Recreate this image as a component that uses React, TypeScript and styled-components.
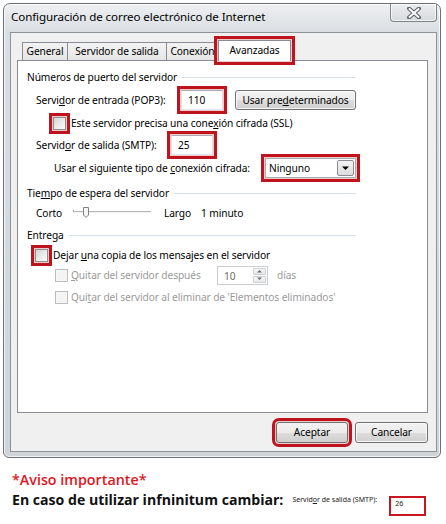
import React from 'react';
import styled, { createGlobalStyle, css } from 'styled-components';

const ui = `"Noto Sans", "Open Sans", "DejaVu Sans", sans-serif`;

const Global = createGlobalStyle`
  html, body { margin: 0; padding: 0; background: #ffffff; }
  body { font-family: ${ui}; color: #000; }
  * { box-sizing: border-box; }
`;

type HL = { $hl?: boolean };

const highlight = css<HL>`
  ${(p) =>
    p.$hl &&
    css`
      outline: 3px solid #bd141e;
      outline-offset: 1px;
      box-shadow: 0 0 0 1px #f2c9cb;
    `}
`;

const dialogText = css`
  font-size: 10.2px;
  letter-spacing: -0.1px;
`;

const Page = styled.div`
  width: 446px;
  height: 524px;
  padding: 3px 0 0 3px;
  display: flex;
  flex-direction: column;
  overflow: hidden;
`;

const Window = styled.div`
  width: 438px;
  height: 455px;
  border: 1px solid #6b7075;
  border-radius: 7px 7px 6px 6px;
  background: linear-gradient(#eef0f2, #dadee2 28px, #cfd4d9);
  box-shadow: inset 0 0 0 1px rgba(255, 255, 255, 0.75);
  display: flex;
  flex-direction: column;
`;

const TitleBar = styled.div`
  height: 28px;
  display: flex;
  justify-content: space-between;
  align-items: flex-start;
  padding: 0 3px 0 7px;
`;

const Title = styled.div`
  font-size: 11.6px;
  line-height: 26px;
  color: #000;
  letter-spacing: -0.1px;
`;

const CloseButton = styled.div`
  width: 47px;
  height: 18px;
  border: 1px solid #7d8389;
  border-top: none;
  border-radius: 0 0 4px 4px;
  background: linear-gradient(#eceef0, #d6dade);
  box-shadow: inset 0 0 0 1px rgba(255, 255, 255, 0.7);
  display: flex;
  align-items: center;
  justify-content: center;
`;

const Client = styled.div`
  flex: 1;
  margin: 0 3px 5px 6px;
  border: 1px solid #8d9296;
  background: #f0f0f0;
  padding: 7px 8px 8px 6px;
  display: flex;
  flex-direction: column;
`;

const TabRow = styled.div`
  height: 20px;
  display: flex;
  align-items: flex-end;
  padding-left: 6px;
  position: relative;
  z-index: 1;
`;

const Tab = styled.div<{ $w: number; $active?: boolean } & HL>`
  width: ${(p) => p.$w}px;
  height: 18px;
  margin-left: -1px;
  border: 1px solid #898c95;
  border-bottom: none;
  background: linear-gradient(#f3f3f3, #e5e5e5);
  ${dialogText}
  line-height: 17px;
  text-align: center;
  white-space: nowrap;
  ${(p) =>
    p.$active &&
    css`
      height: 21px;
      margin: 0 -2px -1px -1px;
      background: #ffffff;
      line-height: 19px;
      position: relative;
      z-index: 2;
    `}
  ${highlight}
`;

const Panel = styled.div`
  flex: 1;
  border: 1px solid #898c95;
  background: #ffffff;
  padding: 8px 0 0 9px;
  ${dialogText}
`;

const Content = styled.div`
  width: 329px;
  display: flex;
  flex-direction: column;
`;

const Heading = styled.div<{ $mt?: number }>`
  height: 16px;
  margin-top: ${(p) => p.$mt ?? 0}px;
  display: flex;
  align-items: center;
  gap: 5px;
  white-space: nowrap;
  &::after {
    content: '';
    flex: 1;
    height: 1px;
    background: #d5dfe5;
  }
`;

const Row = styled.div<{ $h: number; $mt?: number; $indent?: number }>`
  height: ${(p) => p.$h}px;
  margin-top: ${(p) => p.$mt ?? 0}px;
  padding-left: ${(p) => p.$indent ?? 0}px;
  display: flex;
  align-items: center;
  white-space: nowrap;
`;

const Label = styled.span<{ $w?: number; $ml?: number; $disabled?: boolean }>`
  ${(p) => p.$w !== undefined && `width: ${p.$w}px; flex: none;`}
  margin-left: ${(p) => p.$ml ?? 0}px;
  color: ${(p) => (p.$disabled ? '#9a9a9a' : '#000')};
`;

const Field = styled.div<{ $w: number; $h?: number } & HL>`
  width: ${(p) => p.$w}px;
  height: ${(p) => p.$h ?? 20}px;
  border: 1px solid #abadb3;
  border-color: #abadb3 #dbdfe6 #e3e9ef #e2e3ea;
  background: #fff;
  padding-left: 6px;
  line-height: ${(p) => (p.$h ?? 20) - 2}px;
  flex: none;
  ${highlight}
`;

const Button = styled.div<{ $w: number; $h?: number; $ml?: number } & HL>`
  width: ${(p) => p.$w}px;
  height: ${(p) => p.$h ?? 21}px;
  margin-left: ${(p) => p.$ml ?? 0}px;
  border: 1px solid #707070;
  border-radius: 3px;
  background: linear-gradient(#f2f2f2 0%, #ebebeb 50%, #dddddd 51%, #cfcfcf 100%);
  box-shadow: inset 0 0 0 1px rgba(255, 255, 255, 0.8);
  ${dialogText}
  line-height: ${(p) => (p.$h ?? 21) - 2}px;
  text-align: center;
  flex: none;
  ${highlight}
`;

const Check = styled.span<{ $disabled?: boolean } & HL>`
  width: 13px;
  height: 13px;
  flex: none;
  border: 1px solid ${(p) => (p.$disabled ? '#bcbcbc' : '#8e8f8f')};
  background: ${(p) =>
    p.$disabled
      ? '#f4f4f4'
      : 'linear-gradient(135deg, #d4d6d9 0%, #eeeeee 60%, #fbfbfb 100%)'};
  box-shadow: inset 0 0 0 1px ${(p) => (p.$disabled ? '#f7f7f7' : '#f2f2f2')};
  ${highlight}
`;

const Select = styled.div<HL>`
  width: 91px;
  height: 20px;
  flex: none;
  border: 1px solid #abadb3;
  background: #fff;
  display: flex;
  align-items: center;
  justify-content: space-between;
  padding: 1px 1px 1px 3px;
  ${highlight}
`;

const DropButton = styled.div`
  width: 17px;
  height: 16px;
  border: 1px solid #8a8e94;
  border-radius: 2px;
  background: linear-gradient(#f4f4f4, #dcdcdc);
  display: flex;
  align-items: center;
  justify-content: center;
`;

const Spin = styled.div`
  width: 51px;
  height: 19px;
  flex: none;
  border: 1px solid #c9ccd1;
  background: #fff;
  display: flex;
  justify-content: space-between;
  padding: 1px;
  color: #6d6d6d;
`;

const SpinText = styled.span`
  padding-left: 5px;
  line-height: 17px;
`;

const SpinButtons = styled.div`
  width: 13px;
  display: flex;
  flex-direction: column;
  gap: 1px;
`;

const SpinBtn = styled.div`
  flex: 1;
  border: 1px solid #cdd0d4;
  border-radius: 1px;
  background: linear-gradient(#f7f7f7, #e8e8e8);
  display: flex;
  align-items: center;
  justify-content: center;
`;

const ButtonRow = styled.div`
  margin-top: 9px;
  display: flex;
  justify-content: flex-end;
  gap: 7px;
`;

const Notice = styled.div`
  margin-top: 12px;
  padding-left: 9px;
  display: flex;
  flex-direction: column;
`;

const Warning = styled.div`
  font-family: "Open Sans", "Noto Sans", sans-serif;
  font-weight: 600;
  font-size: 14.3px;
  line-height: 20px;
  color: #e3151c;
`;

const NoteRow = styled.div`
  display: flex;
  align-items: flex-start;
  height: 26px;
`;

const NoteText = styled.span`
  font-family: "Open Sans", "Noto Sans", sans-serif;
  font-weight: 700;
  font-size: 14.1px;
  line-height: 20px;
  color: #111;
  white-space: nowrap;
`;

const MiniLabel = styled.span`
  margin-left: 9px;
  font-size: 7px;
  line-height: 20px;
  color: #222;
  white-space: nowrap;
`;

const MiniField = styled.div`
  width: 37px;
  height: 20px;
  margin: 6px 0 0 12px;
  border: 2px solid #c8161f;
  background: #fff;
  font-size: 7px;
  line-height: 10px;
  padding: 1px 0 0 4px;
  color: #222;
`;

const Slider = () => (
  <svg width="78" height="14" viewBox="0 0 78 14" style={{ flex: 'none' }}>
    <line x1="0.5" y1="4" x2="0.5" y2="7" stroke="#a0a0a0" />
    <rect x="0" y="5" width="78" height="1" fill="#b7b7b7" />
    <rect x="0" y="6" width="78" height="1" fill="#f2f2f2" />
    <path d="M10.5 1.5 H15.5 V9 L13 11.5 L10.5 9 Z" fill="#f5f5f5" stroke="#7f7f7f" />
  </svg>
);

const Arrow = ({ up, size = 7 }: { up?: boolean; size?: number }) => (
  <svg width={size} height={Math.ceil(size / 2) + 1} viewBox="0 0 7 4">
    <path d={up ? 'M0 4 L3.5 0.5 L7 4 Z' : 'M0 0 L3.5 3.5 L7 0 Z'} fill="currentColor" />
  </svg>
);

const CloseX = () => (
  <svg width="16" height="12" viewBox="0 0 16 12">
    <path
      d="M3 1.5 L13 10.5 M13 1.5 L3 10.5"
      stroke="#5c6268"
      strokeWidth="4"
      strokeLinecap="round"
      fill="none"
    />
    <path d="M3.5 2 L12.5 10 M12.5 2 L3.5 10" stroke="#ffffff" strokeWidth="2" strokeLinecap="round" fill="none" />
  </svg>
);

export default function App() {
  return (
    <>
      <Global />
      <Page>
        <Window>
          <TitleBar>
            <Title>Configuración de correo electrónico de Internet</Title>
            <CloseButton>
              <CloseX />
            </CloseButton>
          </TitleBar>
          <Client>
            <TabRow>
              <Tab $w={46}>General</Tab>
              <Tab $w={100}>Servidor de salida</Tab>
              <Tab $w={53}>Conexión</Tab>
              <Tab $w={73} $active $hl>
                Avanzadas
              </Tab>
            </TabRow>
            <Panel>
              <Content>
                <Heading>Números de puerto del servidor</Heading>
                <Row $h={22} $mt={4} $indent={9}>
                  <Label $w={145}>
                    Servi<u>d</u>or de entrada (POP3):
                  </Label>
                  <Field $w={42} $hl>
                    110
                  </Field>
                  <Button $w={121} $h={20} $ml={12}>
                    Usar pre<u>d</u>eterminados
                  </Button>
                </Row>
                <Row $h={20} $mt={2} $indent={26}>
                  <Check $hl />
                  <Label $ml={5}>
                    Este servidor precisa una cone<u>x</u>ión cifrada (SSL)
                  </Label>
                </Row>
                <Row $h={22} $mt={1} $indent={9}>
                  <Label $w={135}>
                    Servid<u>o</u>r de salida (SMTP):
                  </Label>
                  <Field $w={42} $hl>
                    25
                  </Field>
                </Row>
                <Row $h={22} $mt={1} $indent={27}>
                  <Label $w={211}>
                    Usar el siguiente tipo de <u>c</u>onexión cifrada:
                  </Label>
                  <Select $hl>
                    <span>Ninguno</span>
                    <DropButton>
                      <Arrow />
                    </DropButton>
                  </Select>
                </Row>
                <Heading $mt={6}>
                  <span>
                    Tie<u>m</u>po de espera del servidor
                  </span>
                </Heading>
                <Row $h={18} $mt={3} $indent={9}>
                  <Label $w={37}>Corto</Label>
                  <Slider />
                  <Label $w={37} $ml={13}>
                    Largo
                  </Label>
                  <Label>1 minuto</Label>
                </Row>
                <Heading $mt={5}>Entrega</Heading>
                <Row $h={20} $mt={2} $indent={8}>
                  <Check $hl />
                  <Label $ml={5}>
                    Dejar <u>u</u>na copia de los mensajes en el servidor
                  </Label>
                </Row>
                <Row $h={20} $indent={28}>
                  <Check $disabled />
                  <Label $w={146} $ml={3} $disabled>
                    <u>Q</u>uitar del servidor después
                  </Label>
                  <Spin>
                    <SpinText>10</SpinText>
                    <SpinButtons>
                      <SpinBtn>
                        <Arrow up size={5} />
                      </SpinBtn>
                      <SpinBtn>
                        <Arrow size={5} />
                      </SpinBtn>
                    </SpinButtons>
                  </Spin>
                  <Label $ml={9} $disabled>
                    días
                  </Label>
                </Row>
                <Row $h={20} $mt={2} $indent={28}>
                  <Check $disabled />
                  <Label $ml={3} $disabled>
                    Qui<u>t</u>ar del servidor al eliminar de 'Elementos eliminados'
                  </Label>
                </Row>
              </Content>
            </Panel>
            <ButtonRow>
              <Button $w={72} $hl>
                Aceptar
              </Button>
              <Button $w={73}>Cancelar</Button>
            </ButtonRow>
          </Client>
        </Window>
        <Notice>
          <Warning>*Aviso importante*</Warning>
          <NoteRow>
            <NoteText>En caso de utilizar infninitum cambiar:</NoteText>
            <MiniLabel>
              Servid<u>o</u>r de salida (SMTP):
            </MiniLabel>
            <MiniField>26</MiniField>
          </NoteRow>
        </Notice>
      </Page>
    </>
  );
}
